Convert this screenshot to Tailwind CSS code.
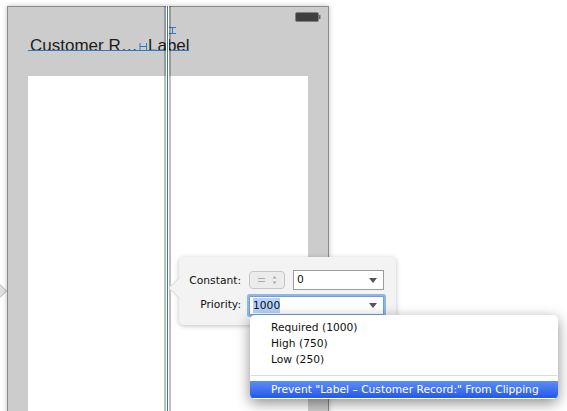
<!DOCTYPE html>
<html>
<head>
<meta charset="utf-8">
<script src="https://cdn.jsdelivr.net/npm/@tailwindcss/browser@4"></script>
</head>
<body class="m-0 bg-white">
<div class="relative w-[567px] h-[411px] overflow-hidden bg-white font-['Liberation_Sans',Arial,sans-serif]">
  <svg class="absolute left-0 top-[284px]" width="8" height="14" viewBox="0 0 8 14"><path d="M0 0.5 L6.5 7 L0 13.5" fill="#e0e0e0" stroke="#b0b0b0" stroke-width="1"/></svg>
  <div class="absolute left-[7px] top-[6px] w-[322px] h-[420px] bg-[#cccccc] border border-[#8a8a8a] shadow-[0_0_5px_rgba(0,0,0,0.25)]">
    <div class="absolute left-[20px] top-[69px] w-[280px] h-[360px] bg-white"></div>
    <svg class="absolute left-[287px] top-[5px]" width="26" height="11" viewBox="0 0 26 11"><rect x="0.5" y="0.5" width="23" height="9" rx="1.5" fill="#3f3f3f" stroke="#808080"/><rect x="24" y="3" width="1.5" height="4" fill="#666"/></svg>
    <div class="absolute left-[22px] top-[29px] text-[17px] leading-[20px] text-[#1c1c1c] whitespace-nowrap">Customer R…</div>
    <div class="absolute left-[140px] top-[29px] text-[17px] leading-[20px] text-[#1c1c1c] whitespace-nowrap">Label</div>
    <div class="absolute left-[20px] top-[43px] w-[161px] h-px bg-[#2f7ac6]"></div>
    <svg class="absolute left-[131px] top-[36px]" width="9" height="8" viewBox="0 0 9 8"><path d="M1 0 V7 M7.5 0 V7 M1 3.5 H7.5" stroke="#2f7ac6" stroke-width="1" fill="none"/></svg>
    <svg class="absolute left-[161px] top-[20px]" width="8" height="8" viewBox="0 0 8 8"><path d="M0 0.5 H7 M0 6.5 H7 M3.5 0.5 V6.5" stroke="#2f7ac6" stroke-width="1" fill="none"/></svg>
  </div>
  <div class="absolute left-[164px] top-[6px] w-[7px] h-[405px] flex">
    <div class="w-[2px] bg-black/25"></div>
    <div class="w-[1px] bg-white"></div>
    <div class="w-[1px] bg-[#3278bf]"></div>
    <div class="w-[1px] bg-white"></div>
    <div class="w-[2px] bg-black/25"></div>
  </div>
  <div class="absolute left-[179px] top-[257px] w-[217px] h-[68px] bg-[#f3f3f3] rounded-[5px] shadow-[0_1px_5px_rgba(0,0,0,0.25)]">
    <svg class="absolute left-[-11px] top-[20px]" width="12" height="22" viewBox="0 0 12 22"><path d="M12 0 L0.5 11 L12 22" fill="#f3f3f3" stroke="#d4d4d4" stroke-width="1"/><rect x="11" y="0.5" width="1" height="21" fill="#f3f3f3"/></svg>
    <div class="absolute right-[155px] top-[17px] text-[10.7px] leading-[14px] text-[#111] font-['DejaVu_Sans',sans-serif]">Constant:</div>
    <div class="absolute left-[70px] top-[14px] w-[36px] h-[18px] rounded-[4px] border border-[#c6c6c6] bg-[#ececec] flex items-center justify-center gap-[7px]">
      <span class="w-[7px] h-[4px] border-y border-[#aaa]"></span>
      <svg width="5" height="10" viewBox="0 0 5 10"><path d="M2.5 1 L4.5 3.5 H0.5 Z M2.5 9 L4.5 6.5 H0.5 Z" fill="#aaa"/></svg>
    </div>
    <div class="absolute left-[114px] top-[13px] w-[91px] h-[20px] border border-[#9c9c9c] bg-white flex items-center justify-between pl-[3px] pr-[6px]">
      <span class="text-[10.7px] leading-[14px] text-[#111] font-['DejaVu_Sans',sans-serif]">0</span>
      <svg width="8" height="5" viewBox="0 0 8 5"><path d="M0 0 H8 L4 5 Z" fill="#555"/></svg>
    </div>
    <div class="absolute right-[155px] top-[41px] text-[10.7px] leading-[14px] text-[#111] font-['DejaVu_Sans',sans-serif]">Priority:</div>
    <div class="absolute left-[70px] top-[39px] w-[135px] h-[19px] border border-[#6f9fd4] ring-2 ring-[#8fb6e6] rounded-[1px] bg-white flex items-center justify-between pl-[3px] pr-[6px]">
      <span class="bg-[#b5d3fd] text-[10.7px] leading-[15px] text-[#111] font-['DejaVu_Sans',sans-serif]">1000</span>
      <svg width="8" height="5" viewBox="0 0 8 5"><path d="M0 0 H8 L4 5 Z" fill="#555"/></svg>
    </div>
  </div>
  <div class="absolute left-[250px] top-[315px] w-[308px] h-[84px] bg-white rounded-[5px] shadow-[0_4px_14px_rgba(0,0,0,0.45)] overflow-hidden text-[10.7px] text-[#111] font-['DejaVu_Sans',sans-serif] flex flex-col">
    <div class="pt-[1px] h-[52px] pl-[21px] flex flex-col">
      <div class="h-[16px] leading-[23px]">Required (1000)</div>
      <div class="h-[16px] leading-[23px]">High (750)</div>
      <div class="h-[16px] leading-[23px]">Low (250)</div>
    </div>
    <div class="mt-[8px] mx-[1px] h-px bg-[#dcdcdc]"></div>
    <div class="mt-[5px] h-[17px] leading-[17px] pl-[21px] text-white bg-gradient-to-b from-[#5f8df5] to-[#2457e8] whitespace-nowrap">Prevent "Label – Customer Record:" From Clipping</div>
  </div>
</div>
</body>
</html>
